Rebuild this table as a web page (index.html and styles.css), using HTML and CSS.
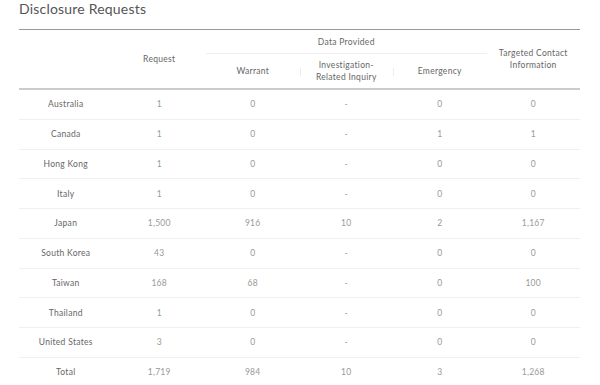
FILE: index.html
```html
<!DOCTYPE html>
<html>
<head>
<meta charset="utf-8">
<link rel="stylesheet" href="styles.css">
</head>
<body>
<div class="page">
  <h2 class="title">Disclosure Requests</h2>
  <table class="data">
    <thead>
      <tr class="head-top">
        <th rowspan="2"></th>
        <th rowspan="2">Request</th>
        <th colspan="3" class="group">Data Provided</th>
        <th rowspan="2">Targeted Contact<br>Information</th>
      </tr>
      <tr class="head-sub">
        <th>Warrant</th>
        <th class="sep">Investigation-<br>Related Inquiry</th>
        <th class="sep">Emergency</th>
      </tr>
    </thead>
    <tbody>
      <tr><td class="name">Australia</td><td>1</td><td>0</td><td>-</td><td>0</td><td>0</td></tr>
      <tr><td class="name">Canada</td><td>1</td><td>0</td><td>-</td><td>1</td><td>1</td></tr>
      <tr><td class="name">Hong Kong</td><td>1</td><td>0</td><td>-</td><td>0</td><td>0</td></tr>
      <tr><td class="name">Italy</td><td>1</td><td>0</td><td>-</td><td>0</td><td>0</td></tr>
      <tr><td class="name">Japan</td><td>1,500</td><td>916</td><td>10</td><td>2</td><td>1,167</td></tr>
      <tr><td class="name">South Korea</td><td>43</td><td>0</td><td>-</td><td>0</td><td>0</td></tr>
      <tr><td class="name">Taiwan</td><td>168</td><td>68</td><td>-</td><td>0</td><td>100</td></tr>
      <tr><td class="name">Thailand</td><td>1</td><td>0</td><td>-</td><td>0</td><td>0</td></tr>
      <tr><td class="name">United States</td><td>3</td><td>0</td><td>-</td><td>0</td><td>0</td></tr>
      <tr><td class="name">Total</td><td>1,719</td><td>984</td><td>10</td><td>3</td><td>1,268</td></tr>
    </tbody>
  </table>
</div>
</body>
</html>
```
FILE: styles.css
```css
html, body {
  margin: 0;
  padding: 0;
  background: #fff;
}
body {
  font-family: Lato, "Noto Sans", sans-serif;
  color: #555;
}
.page {
  padding: 0 20px 0 19px;
}
.title {
  margin: 0;
  font-size: 14px;
  font-weight: 400;
  color: #555;
  line-height: 17px;
  letter-spacing: 0.2px;
}
.data {
  margin-top: 12px;
  width: 561px;
  border-collapse: collapse;
  table-layout: fixed;
  font-size: 8.5px;
  letter-spacing: 0.3px;
  border-top: 1px solid #999;
}
.data th {
  font-weight: 400;
  color: #666;
  text-align: center;
  vertical-align: middle;
  padding: 0;
  line-height: 12px;
  position: relative;
}
.head-top th {
  height: 23px;
}
.head-top th.group {
  border-bottom: 1px solid #eee;
}
.head-sub th {
  height: 34px;
}
.head-sub th.sep::before {
  content: "";
  position: absolute;
  left: 0;
  top: 14px;
  height: 8px;
  border-left: 1px solid #eee;
}
thead {
  border-bottom: 2px solid #ccc;
}
.data td {
  text-align: center;
  vertical-align: middle;
  padding: 0;
  height: 28.75px;
  color: #999;
  border-bottom: 1px solid #f0f0f0;
}
.data td.name {
  color: #666;
}
```
